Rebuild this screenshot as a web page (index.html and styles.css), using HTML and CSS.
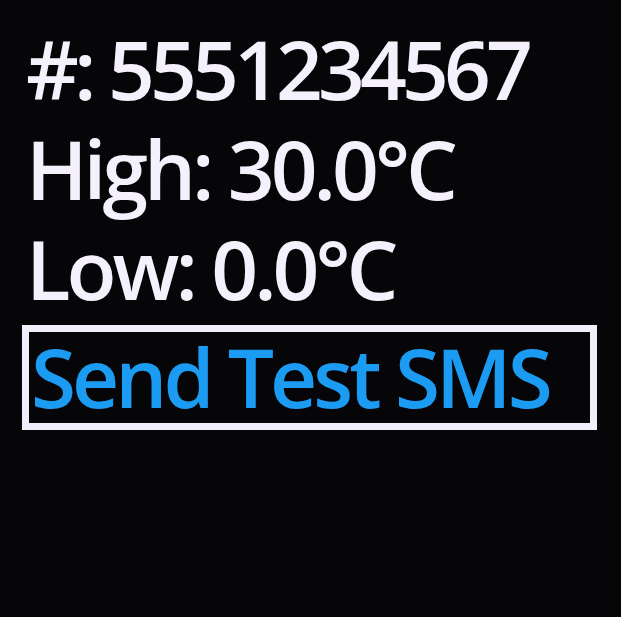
FILE: index.html
```html
<!DOCTYPE html>
<html>
<head>
<meta charset="utf-8">
<link rel="stylesheet" href="styles.css">
</head>
<body>
<div class="screen">
  <div class="line number">#: 5551234567</div>
  <div class="line">High: 30.0°C</div>
  <div class="line">Low: 0.0°C</div>
  <div class="button">Send Test SMS</div>
</div>
</body>
</html>
```
FILE: styles.css
```css
html, body {
  margin: 0;
  padding: 0;
  background: #060507;
}
.screen {
  width: 621px;
  height: 617px;
  box-sizing: border-box;
  padding: 18px 0 0 22px;
  font-family: "Open Sans", "Noto Sans", sans-serif;
  font-weight: 600;
  font-size: 82px;
  letter-spacing: -4px;
}
.line {
  color: #f4f0fc;
  line-height: 100px;
  height: 100px;
  padding-left: 4px;
  white-space: nowrap;
}
.number {
  letter-spacing: -4.9px;
}
.button {
  margin-top: 7px;
  width: 575px;
  height: 105px;
  box-sizing: border-box;
  border: 7px solid #f2eefb;
  padding-left: 2px;
  color: #1c9bf3;
  line-height: 88px;
  white-space: nowrap;
}
```
